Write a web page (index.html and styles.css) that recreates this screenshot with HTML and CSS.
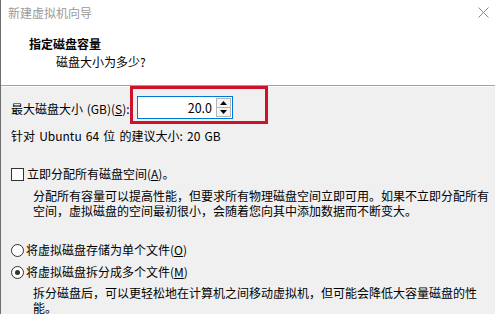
FILE: index.html
```html
<!DOCTYPE html>
<html lang="zh-CN">
<head>
<meta charset="utf-8">
<title>新建虚拟机向导</title>
<link rel="stylesheet" href="styles.css">
</head>
<body>
<div class="dialog">
  <div class="header">
    <div class="titlebar">
      <span class="title">新建虚拟机向导</span>
      <svg class="close" width="11" height="11" viewBox="0 0 11 11"><path d="M0.5 0.5 L10.5 10.5 M10.5 0.5 L0.5 10.5" stroke="#8a8a8a" stroke-width="1" fill="none"/></svg>
    </div>
    <div class="heading">指定磁盘容量</div>
    <div class="subheading">磁盘大小为多少?</div>
  </div>
  <div class="content">
    <div class="size-row">
      <span class="size-label">最大磁盘大小 (GB)(<u>S</u>):</span>
      <div class="spinbox">
        <span class="spin-value">20.0</span>
        <div class="spin-buttons">
          <span class="spin-btn"><svg width="7" height="4" viewBox="0 0 7 4"><path d="M3.5 0 L7 4 L0 4 Z" fill="#000"/></svg></span>
          <span class="spin-btn"><svg width="7" height="4" viewBox="0 0 7 4"><path d="M0 0 L7 0 L3.5 4 Z" fill="#000"/></svg></span>
        </div>
        <span class="highlight"></span>
      </div>
    </div>
    <div class="recommend">针对 Ubuntu 64 位 的建议大小: 20 GB</div>
    <div class="option option-check">
      <span class="checkbox"></span>
      <span>立即分配所有磁盘空间(<u>A</u>)。</span>
    </div>
    <div class="desc desc-first">
      <div class="desc-line">分配所有容量可以提高性能，但要求所有物理磁盘空间立即可用。如果不立即分配所有</div>
      <div class="desc-line">空间，虚拟磁盘的空间最初很小，会随着您向其中添加数据而不断变大。</div>
    </div>
    <div class="option option-radio1">
      <span class="radio"></span>
      <span>将虚拟磁盘存储为单个文件(<u>O</u>)</span>
    </div>
    <div class="option option-radio2">
      <span class="radio checked"></span>
      <span>将虚拟磁盘拆分成多个文件(<u>M</u>)</span>
    </div>
    <div class="desc desc-second">
      <div class="desc-line">拆分磁盘后，可以更轻松地在计算机之间移动虚拟机，但可能会降低大容量磁盘的性</div>
      <div class="desc-line">能。</div>
    </div>
  </div>
</div>
</body>
</html>
```

FILE: styles.css
```css
html, body {
  margin: 0;
  padding: 0;
}
body {
  width: 495px;
  height: 314px;
  overflow: hidden;
  font-family: "Noto Sans CJK SC", "Noto Sans", sans-serif;
  font-size: 12px;
  color: #000;
  background: #f0f0f0;
}
.dialog {
  display: flex;
  flex-direction: column;
  height: 314px;
  border-left: 1px solid #6e6e6e;
  box-sizing: border-box;
}
.header {
  background: #fff;
  height: 85px;
  border-bottom: 1px solid #a0a0a0;
  box-sizing: content-box;
  flex: none;
}
.titlebar {
  height: 26px;
  display: flex;
  align-items: center;
  justify-content: space-between;
  padding: 0 6px 0 7px;
}
.title {
  color: #9a9a9a;
  line-height: 26px;
}
.close {
  display: block;
  margin-top: -1px;
}
.heading {
  margin-top: 9px;
  padding-left: 28px;
  font-weight: bold;
  line-height: 18px;
}
.subheading {
  padding-left: 55px;
  line-height: 18px;
}
.content {
  flex: 1;
  border-top: 1px solid #fff;
  padding-left: 10px;
}
.size-row {
  display: flex;
  align-items: center;
  margin-top: 9px;
  height: 23px;
}
.size-label {
  line-height: 18px;
  padding-top: 2px;
  width: 126px;
  white-space: nowrap;
  word-spacing: 1px;
}
.spinbox {
  position: relative;
  width: 96px;
  height: 23px;
  box-sizing: border-box;
  border: 1px solid #0078d7;
  background: #fff;
  display: flex;
  align-items: stretch;
}
.spin-value {
  flex: 1;
  text-align: right;
  line-height: 21px;
  padding-right: 4px;
  font-size: 12.5px;
}
.spin-buttons {
  width: 15px;
  display: flex;
  flex-direction: column;
  padding: 1px 1px 1px 0;
}
.spin-btn {
  flex: 1;
  display: flex;
  align-items: center;
  justify-content: center;
  border: 1px solid #b5b5b5;
  background: #f4f4f4;
}
.spin-btn + .spin-btn {
  border-top: none;
}
.highlight {
  position: absolute;
  left: -8px;
  top: -11px;
  width: 138px;
  height: 38px;
  box-sizing: border-box;
  border: 3px solid #d0112b;
  pointer-events: none;
}
.recommend {
  margin-top: 8px;
  line-height: 18px;
  word-spacing: 1.5px;
}
.option {
  display: flex;
  align-items: center;
  line-height: 18px;
}
.option-check {
  margin-top: 20px;
  gap: 3px;
}
.option-radio1 {
  margin-top: 23px;
  gap: 2px;
}
.option-radio2 {
  margin-top: 4px;
  gap: 2px;
}
.checkbox {
  width: 13px;
  height: 13px;
  box-sizing: border-box;
  border: 1px solid #333;
  background: #fff;
  flex: none;
}
.radio {
  width: 13px;
  height: 13px;
  box-sizing: border-box;
  border: 1px solid #333;
  border-radius: 50%;
  background: #fff;
  flex: none;
  display: flex;
  align-items: center;
  justify-content: center;
}
.radio.checked::after {
  content: "";
  width: 5px;
  height: 5px;
  border-radius: 50%;
  background: #333;
}
.desc {
  margin: 4px 0 0 22px;
  white-space: nowrap;
}
.desc-line {
  height: 15px;
  line-height: 15px;
}
.desc-first {
  margin-top: 5px;
}
u {
  text-decoration: underline;
  text-underline-offset: 1px;
}
```
